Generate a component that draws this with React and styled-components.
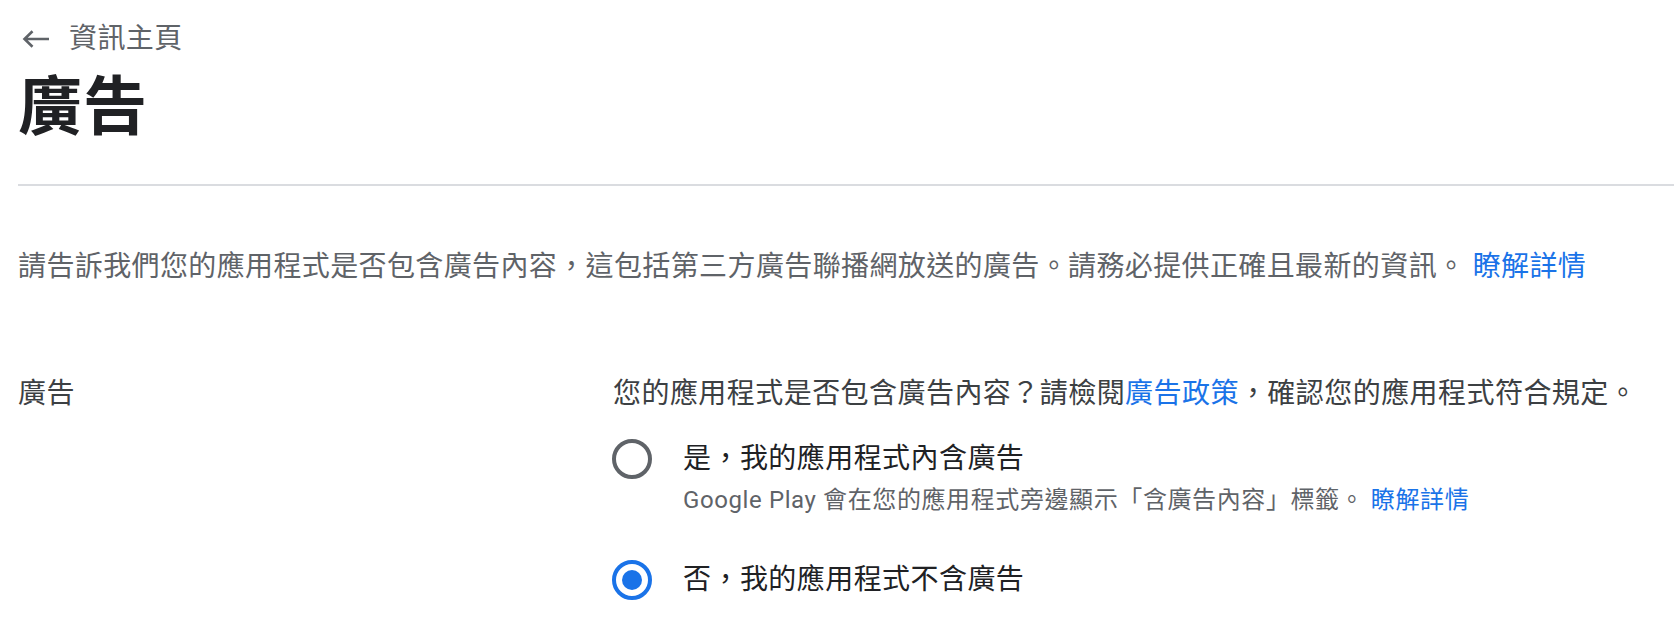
import React, { useState } from "react";
import styled, { createGlobalStyle } from "styled-components";

const GlobalStyle = createGlobalStyle`
  html, body { margin: 0; padding: 0; background: #ffffff; }
  body {
    font-family: Roboto, "Noto Sans CJK TC", "Noto Sans", sans-serif;
    color: #202124;
  }
`;

const Page = styled.div`
  padding: 19px 0 0 18px;
  overflow: hidden;
`;

const BackLink = styled.a`
  display: flex;
  align-items: center;
  gap: 19px;
  height: 40px;
  padding-left: 4px;
  color: #5f6368;
  font-size: 28px;
  line-height: 40px;
  letter-spacing: 0.4px;
  text-decoration: none;
  cursor: pointer;
`;

const Title = styled.h1`
  margin: 11px 0 0 0;
  font-size: 64px;
  line-height: 76px;
  font-weight: 700;
  color: #202124;
  letter-spacing: 1px;
`;

const Divider = styled.hr`
  margin: 38px 0 0 0;
  border: none;
  height: 2px;
  background: #dadce0;
`;

const Description = styled.p`
  margin: 61px 0 0 0;
  font-size: 28px;
  line-height: 40px;
  letter-spacing: 0.38px;
  color: #5f6368;
`;

const Link = styled.a`
  color: #1a73e8;
  text-decoration: none;
  cursor: pointer;
`;

const FormRow = styled.div`
  display: grid;
  grid-template-columns: 594px 1fr;
  margin-top: 87px;
`;

const FieldLabel = styled.div`
  font-size: 28px;
  line-height: 40px;
  letter-spacing: 0.4px;
  color: #3c4043;
`;

const Field = styled.div`
  display: flex;
  flex-direction: column;
`;

const Question = styled.div`
  font-size: 28px;
  line-height: 40px;
  letter-spacing: 0.45px;
  color: #3c4043;
  margin-left: 1px;
`;

const Options = styled.div`
  display: flex;
  flex-direction: column;
  gap: 43px;
  margin-top: 25px;
`;

const Option = styled.label`
  display: grid;
  grid-template-columns: 40px 1fr;
  column-gap: 31px;
  cursor: pointer;
`;

const RadioCircle = styled.span`
  box-sizing: border-box;
  width: 40px;
  height: 40px;
  border-radius: 50%;
  border: 4px solid ${(p) => (p.$checked ? "#1a73e8" : "#5f6368")};
  display: flex;
  align-items: center;
  justify-content: center;
  &::after {
    content: "";
    width: 20px;
    height: 20px;
    border-radius: 50%;
    background: #1a73e8;
    display: ${(p) => (p.$checked ? "block" : "none")};
  }
`;

const OptionText = styled.div`
  display: flex;
  flex-direction: column;
`;

const OptionTitle = styled.div`
  font-size: 28px;
  line-height: 40px;
  letter-spacing: 0.44px;
  color: #202124;
`;

const OptionHint = styled.div`
  margin-top: 4px;
  font-size: 24px;
  line-height: 34px;
  letter-spacing: 0.6px;
  color: #5f6368;
`;

const ArrowIcon = () => (
  <svg width="28" height="20" viewBox="0 0 28 20" aria-hidden="true">
    <path
      d="M27 10H3M10.5 2.2L2.5 10l8 7.8"
      fill="none"
      stroke="#5f6368"
      strokeWidth="2.6"
      strokeLinecap="butt"
      strokeLinejoin="miter"
    />
  </svg>
);

export default function App() {
  const [value, setValue] = useState("no");
  const options = [
    {
      id: "yes",
      title: "是，我的應用程式內含廣告",
      hint: true,
    },
    { id: "no", title: "否，我的應用程式不含廣告" },
  ];
  return (
    <>
      <GlobalStyle />
      <Page>
        <BackLink>
          <ArrowIcon />
          <span>資訊主頁</span>
        </BackLink>
        <Title>廣告</Title>
        <Divider />
        <Description>
          請告訴我們您的應用程式是否包含廣告內容，這包括第三方廣告聯播網放送的廣告。請務必提供正確且最新的資訊。{" "}
          <Link>瞭解詳情</Link>
        </Description>
        <FormRow>
          <FieldLabel>廣告</FieldLabel>
          <Field>
            <Question>
              您的應用程式是否包含廣告內容？請檢閱<Link>廣告政策</Link>，確認您的應用程式符合規定。
            </Question>
            <Options>
              {options.map((o) => (
                <Option key={o.id} onClick={() => setValue(o.id)}>
                  <RadioCircle $checked={value === o.id} />
                  <OptionText>
                    <OptionTitle>{o.title}</OptionTitle>
                    {o.hint && (
                      <OptionHint>
                        Google Play 會在您的應用程式旁邊顯示「含廣告內容」標籤。{" "}
                        <Link>瞭解詳情</Link>
                      </OptionHint>
                    )}
                  </OptionText>
                </Option>
              ))}
            </Options>
          </Field>
        </FormRow>
      </Page>
    </>
  );
}
